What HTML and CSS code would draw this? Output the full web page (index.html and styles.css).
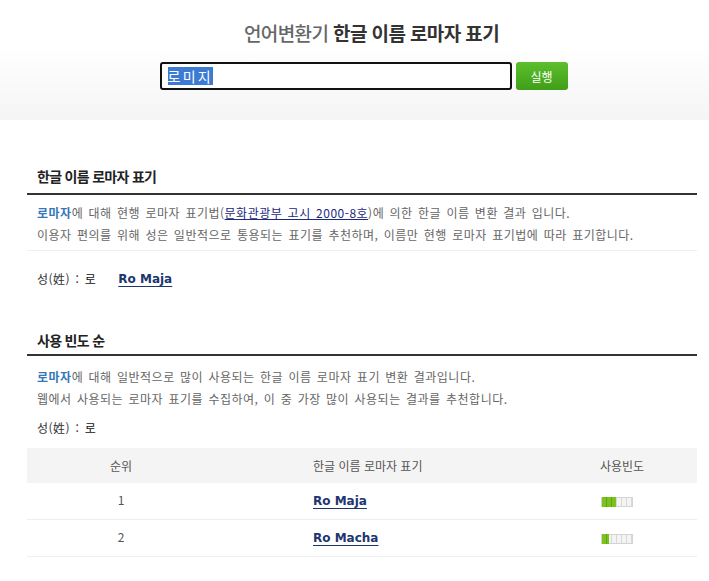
FILE: index.html
```html
<!DOCTYPE html>
<html lang="ko">
<head>
<meta charset="utf-8">
<title>언어변환기 한글 이름 로마자 표기</title>
<link rel="stylesheet" href="styles.css">
</head>
<body>
<header class="top">
  <h1 class="title"><span class="title-sub">언어변환기</span> <span class="title-main">한글 이름 로마자 표기</span></h1>
  <form class="search">
    <div class="search-input"><span class="sel">로미지</span></div>
    <button type="button" class="search-btn">실행</button>
  </form>
</header>
<main class="content">
  <section class="sec sec-first">
    <h2 class="sec-title">한글 이름 로마자 표기</h2>
    <p class="desc desc-sep"><strong class="kw">로마자</strong>에 대해 현행 로마자 표기법(<a class="ref" href="#">문화관광부 고시 2000-8호</a>)에 의한 한글 이름 변환 결과 입니다.<br>이용자 편의를 위해 성은 일반적으로 통용되는 표기를 추천하며, 이름만 현행 로마자 표기법에 따라 표기합니다.</p>
    <div class="result"><span class="surname">성(姓) : <b class="sn">로</b></span><a class="roman" href="#">Ro Maja</a></div>
  </section>
  <section class="sec sec-second">
    <h2 class="sec-title sec-title2">사용 빈도 순</h2>
    <p class="desc desc2"><strong class="kw">로마자</strong>에 대해 일반적으로 많이 사용되는 한글 이름 로마자 표기 변환 결과입니다.<br>웹에서 사용되는 로마자 표기를 수집하여, 이 중 가장 많이 사용되는 결과를 추천합니다.</p>
    <div class="result result2"><span class="surname">성(姓) : <b class="sn">로</b></span></div>
    <div class="table">
      <div class="row head">
        <div class="c1">순위</div>
        <div class="c2">한글 이름 로마자 표기</div>
        <div class="c3">사용빈도</div>
      </div>
      <div class="row">
        <div class="c1">1</div>
        <div class="c2"><a class="roman" href="#">Ro Maja</a></div>
        <div class="c3"><span class="bar"><span class="fill" style="width:14px"></span></span></div>
      </div>
      <div class="row">
        <div class="c1">2</div>
        <div class="c2"><a class="roman" href="#">Ro Macha</a></div>
        <div class="c3"><span class="bar"><span class="fill" style="width:7px"></span></span></div>
      </div>
    </div>
  </section>
</main>
</body>
</html>
```
FILE: styles.css
```css
html, body {
  margin: 0;
  padding: 0;
  background: #fff;
}
body {
  font-family: "Noto Sans CJK KR", "Noto Sans", sans-serif;
  font-size: 12px;
  color: #555;
}
.top {
  height: 120px;
  background: linear-gradient(#ffffff 0%, #ffffff 35%, #f5f5f5 100%);
  padding-left: 18px;
  box-sizing: border-box;
}
.title {
  margin: 0;
  padding-top: 21px;
  padding-left: 16px;
  text-align: center;
  font-size: 19px;
  line-height: 24px;
  letter-spacing: -0.6px;
  font-weight: 700;
}
.title-sub {
  color: #666;
  font-weight: 500;
}
.title-main {
  color: #333;
}
.search {
  display: flex;
  justify-content: center;
  gap: 4px;
  margin: 17px 0 0;
}
.search-input {
  width: 352px;
  height: 28px;
  box-sizing: border-box;
  border: 2px solid #111;
  border-radius: 3px;
  background: #fff;
  padding: 0 6px;
  display: flex;
  align-items: center;
  font-size: 14px;
  color: #222;
}
.sel {
  background: #3b7bd4;
  color: #fff;
  line-height: 18px;
  letter-spacing: 2.3px;
}
.search-btn {
  width: 52px;
  height: 28px;
  border: 0;
  border-radius: 3px;
  background: linear-gradient(#5dbf2c, #3f9e18);
  color: #fff;
  font-family: "Noto Sans CJK KR", sans-serif;
  font-size: 12px;
  padding: 0;
}
.content {
  margin: 0 12px 0 27px;
}
.sec-title {
  margin: 0;
  padding: 0 10px 7px;
  font-size: 14px;
  line-height: 20px;
  letter-spacing: -0.7px;
  font-weight: 700;
  color: #222;
  border-bottom: 2px solid #333;
}
.sec-first .sec-title {
  margin-top: 46px;
}
.sec-title2 {
  margin-top: 41px;
  padding-bottom: 4px;
}
.desc {
  margin: 0;
  padding: 7px 10px 4px;
  line-height: 22px;
  letter-spacing: 0.5px;
  word-spacing: 1.5px;
  color: #666;
}
.desc-sep {
  border-bottom: 1px solid #eee;
}
.desc2 {
  padding-top: 10px;
  padding-bottom: 0;
}
.kw {
  color: #3577b9;
  font-weight: 700;
}
.ref {
  color: #1b2a80;
  text-decoration: underline;
}
.result {
  margin-top: 18px;
  padding: 0 10px;
  line-height: 20px;
  display: flex;
  align-items: center;
  gap: 22px;
  color: #333;
}
.surname {
  letter-spacing: 0.5px;
  word-spacing: 1.5px;
}
.result2 {
  margin-top: 8px;
}
.sn {
  font-weight: 400;
  color: #111;
}
.roman {
  font-family: "DejaVu Sans", Verdana, sans-serif;
  font-weight: 700;
  font-size: 12px;
  color: #1d3670;
  text-decoration: underline;
  text-underline-offset: 3px;
}
.table {
  margin-top: 10px;
}
.row {
  display: grid;
  grid-template-columns: 188px 1fr 154px;
  height: 37px;
  align-items: center;
  border-bottom: 1px solid #eee;
  box-sizing: border-box;
  padding-bottom: 3px;
}
.row.head {
  height: 35px;
  background: #f4f4f4;
  border-bottom: 0;
  color: #555;
  padding-bottom: 1px;
}
.c1, .c3 {
  text-align: center;
}
.c2 {
  padding-left: 98px;
}
.head .c3 {
  padding-left: 4px;
}
.bar {
  display: inline-block;
  vertical-align: middle;
  width: 32px;
  height: 10px;
  box-sizing: border-box;
  border: 1px solid #d4d4d4;
  background: repeating-linear-gradient(90deg, #f4f4f4 0 4px, #d9d9d9 4px 5px);
  position: relative;
  margin-left: -6px;
}
.fill {
  position: absolute;
  left: 0;
  top: -1px;
  bottom: -1px;
  background: repeating-linear-gradient(90deg, #7cc21f 0 4px, #5ea60f 4px 5px);
}
```
